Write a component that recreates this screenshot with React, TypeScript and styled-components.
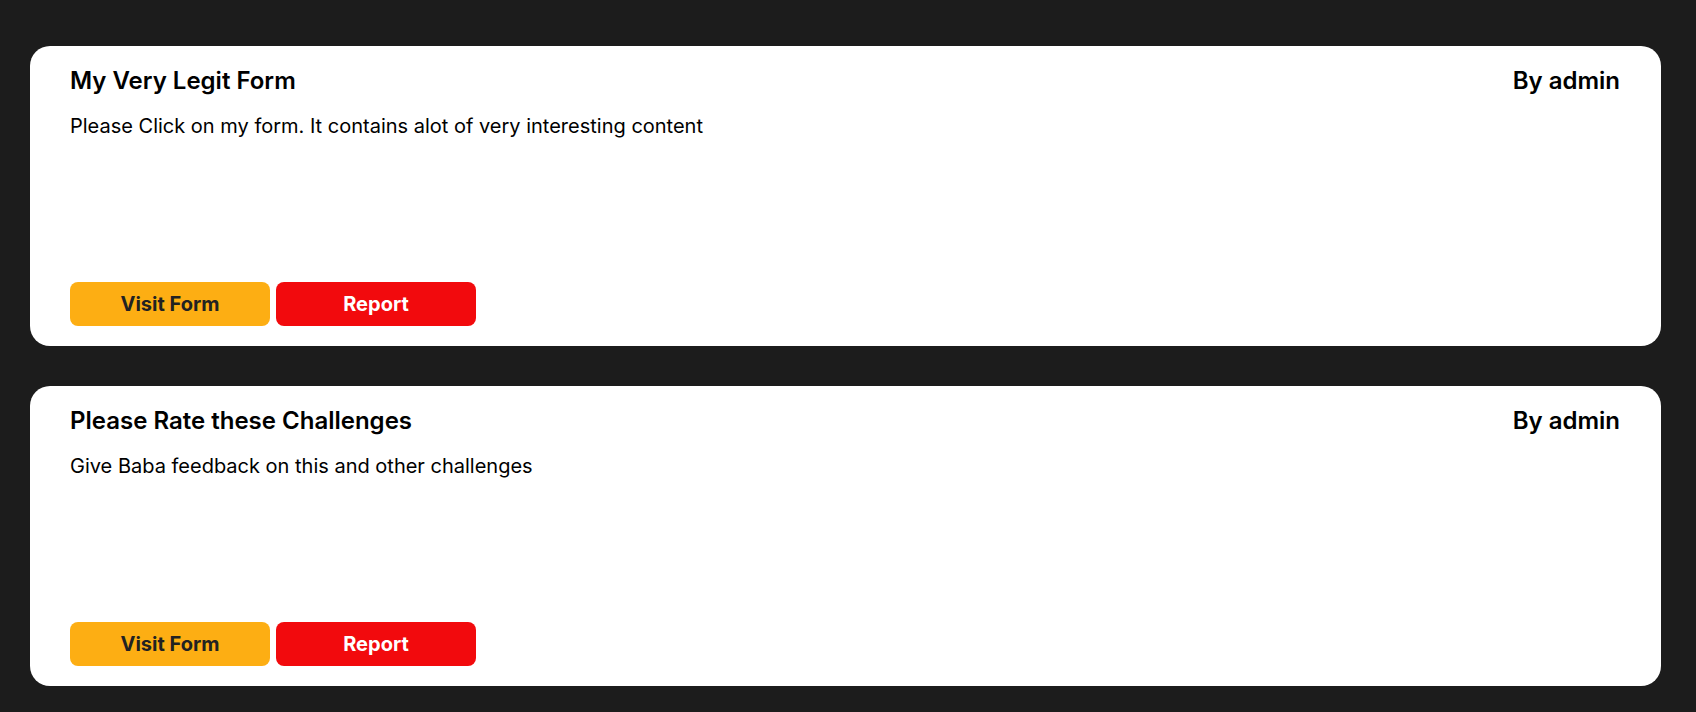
import React from 'react'
import styled, { createGlobalStyle } from 'styled-components'

const GlobalStyle = createGlobalStyle`
  html, body {
    margin: 0;
    padding: 0;
    background: #1c1c1c;
    font-family: Inter, "Noto Sans", sans-serif;
  }
`

type Post = {
  title: string
  author: string
  description: string
}

const posts: Post[] = [
  {
    title: 'My Very Legit Form',
    author: 'admin',
    description: 'Please Click on my form. It contains alot of very interesting content',
  },
  {
    title: 'Please Rate these Challenges',
    author: 'admin',
    description: 'Give Baba feedback on this and other challenges',
  },
]

const App: React.FC = () => (
  <>
    <GlobalStyle />
    <StyledList>
      {posts.map((post) => (
        <StyledCard key={post.title}>
          <StyledHeader>
            <StyledTitle>{post.title}</StyledTitle>
            <StyledAuthor>By {post.author}</StyledAuthor>
          </StyledHeader>
          <StyledDescription>{post.description}</StyledDescription>
          <StyledActions>
            <StyledButton variant='visit'>Visit Form</StyledButton>
            <StyledButton variant='report'>Report</StyledButton>
          </StyledActions>
        </StyledCard>
      ))}
    </StyledList>
  </>
)

const StyledList = styled.div`
  display: flex;
  flex-direction: column;
  gap: 40px;
  padding: 46px 35px 20px 30px;
`

const StyledCard = styled.div`
  height: 300px;
  box-sizing: border-box;
  padding: 20px 41px 20px 40px;
  background: #ffffff;
  border-radius: 20px;
  display: flex;
  flex-direction: column;
`

const StyledHeader = styled.div`
  display: flex;
  justify-content: space-between;
  align-items: baseline;
`

const StyledTitle = styled.h2`
  margin: 0;
  font-size: 24px;
  font-weight: 600;
  color: #000;
`

const StyledAuthor = styled.span`
  font-size: 24px;
  font-weight: 600;
  color: #000;
`

const StyledDescription = styled.p`
  margin: 19px 0 0;
  font-size: 20px;
  color: #000;
  flex: 1;
`

const StyledActions = styled.div`
  display: flex;
  gap: 6px;
`

const StyledButton = styled.button<{ variant: 'visit' | 'report' }>`
  width: 200px;
  height: 44px;
  border: none;
  border-radius: 8px;
  font-family: Inter, "Noto Sans", sans-serif;
  font-size: 20px;
  font-weight: 700;
  cursor: pointer;
  background: ${(p) => (p.variant === 'visit' ? '#fdae13' : '#f20a0d')};
  color: ${(p) => (p.variant === 'visit' ? '#222222' : '#ffffff')};
`

export default App
